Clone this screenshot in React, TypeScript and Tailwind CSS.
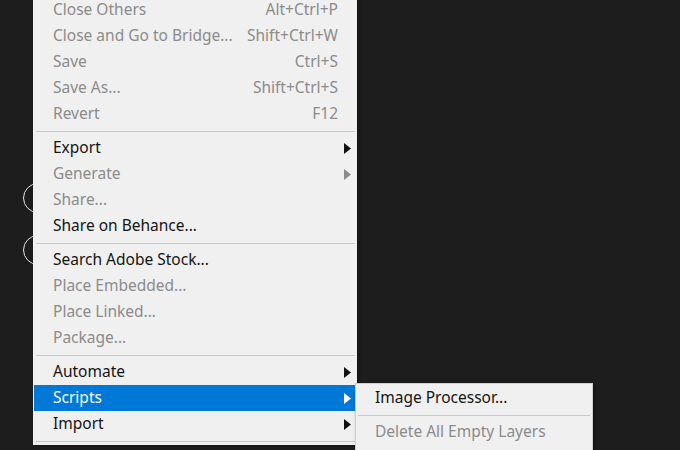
type Item = {
  label: string
  shortcut?: string
  disabled?: boolean
  submenu?: boolean
  active?: boolean
}

type Entry = Item | 'sep'

const entries: Entry[] = [
  { label: 'Close Others', shortcut: 'Alt+Ctrl+P', disabled: true },
  { label: 'Close and Go to Bridge...', shortcut: 'Shift+Ctrl+W', disabled: true },
  { label: 'Save', shortcut: 'Ctrl+S', disabled: true },
  { label: 'Save As...', shortcut: 'Shift+Ctrl+S', disabled: true },
  { label: 'Revert', shortcut: 'F12', disabled: true },
  'sep',
  { label: 'Export', submenu: true },
  { label: 'Generate', submenu: true, disabled: true },
  { label: 'Share...', disabled: true },
  { label: 'Share on Behance...' },
  'sep',
  { label: 'Search Adobe Stock...' },
  { label: 'Place Embedded...', disabled: true },
  { label: 'Place Linked...', disabled: true },
  { label: 'Package...', disabled: true },
  'sep',
  { label: 'Automate', submenu: true },
  { label: 'Scripts', submenu: true, active: true },
  { label: 'Import', submenu: true },
  'sep',
]

function Arrow({ className }: { className: string }) {
  return (
    <svg width="7" height="11" viewBox="0 0 7 11" className={className}>
      <path d="M0 0 L7 5.5 L0 11 Z" fill="currentColor" />
    </svg>
  )
}

function Separator() {
  return (
    <div className="h-[8px] flex items-center px-[2px]">
      <div className="h-px w-full bg-[#c9c9c9]" />
    </div>
  )
}

function Row({ item }: { item: Item }) {
  const color = item.active
    ? 'bg-[#0078d7] text-white'
    : item.disabled
      ? 'text-[#8b8b8b]'
      : 'text-[#141414]'
  return (
    <div className={`h-[26px] flex items-center pl-[19px] pr-[4px] mr-[2px] ${color}`}>
      <span className="flex-1 whitespace-nowrap">{item.label}</span>
      {item.shortcut && <span className="whitespace-nowrap pr-[13px]">{item.shortcut}</span>}
      {item.submenu && (
        <Arrow
          className={
            item.active ? 'text-white' : item.disabled ? 'text-[#8b8b8b]' : 'text-[#111111]'
          }
        />
      )}
    </div>
  )
}

export default function App() {
  return (
    <div
      className="relative w-[680px] h-[450px] overflow-hidden bg-[#1d1d1d] text-[15.5px]"
      style={{ fontFamily: '"Noto Sans", "Open Sans", sans-serif' }}
    >
      {/* round buttons peeking out behind the menu */}
      <div className="absolute left-[23px] top-[183px] w-[30px] h-[30px] rounded-full border-[1.5px] border-[#e6e6e6]" />
      <div className="absolute left-[23px] top-[235px] w-[30px] h-[30px] rounded-full border-[1.5px] border-[#e6e6e6]" />

      {/* File menu */}
      <div className="absolute left-[33px] top-[-3px] w-[324px] bg-[#f0f0f0] pl-[1px] shadow-[2px_0_3px_rgba(0,0,0,0.35)]">
        {entries.map((e, i) =>
          e === 'sep' ? <Separator key={i} /> : <Row key={i} item={e} />
        )}
      </div>

      {/* Scripts submenu */}
      <div className="absolute left-[355px] top-[383px] w-[238px] bg-[#f0f0f0] border border-[#cfcfcf] pt-[1px] shadow-[2px_2px_4px_rgba(0,0,0,0.4)]">
        <div className="h-[26px] flex items-center pl-[19px] text-[#141414] whitespace-nowrap">
          Image Processor...
        </div>
        <Separator />
        <div className="h-[26px] flex items-center pl-[19px] text-[#8b8b8b] whitespace-nowrap">
          Delete All Empty Layers
        </div>
        <div className="h-[10px]" />
      </div>
    </div>
  )
}
